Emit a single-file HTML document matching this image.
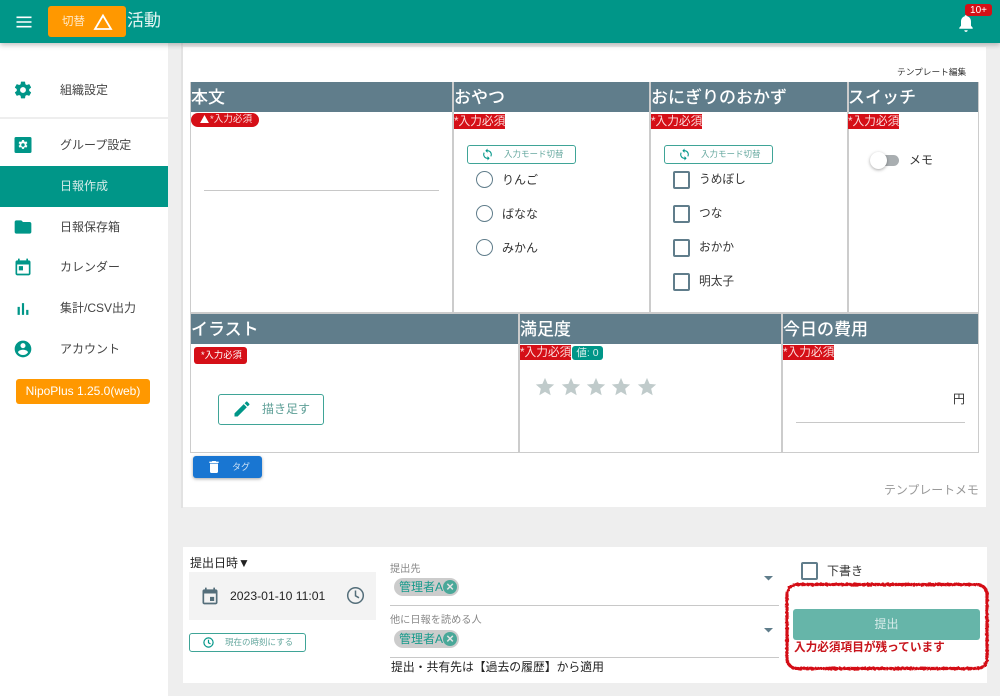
<!DOCTYPE html>
<html lang="ja"><head><meta charset="utf-8"><title>活動</title>
<style>
*{box-sizing:border-box}
html,body{margin:0;padding:0}
body{width:1000px;height:696px;overflow:hidden;position:relative;background:#eee;font-family:"Liberation Sans","Noto Sans CJK JP",sans-serif;color:#333}
.a{position:absolute;white-space:nowrap}
.nav{position:absolute;left:60px;font-size:12px;line-height:16px;color:#444;white-space:nowrap}
.ic{position:absolute;fill:#009688}
.h{position:absolute;background:#607d8b;color:#fff;font-size:17px;font-weight:500;line-height:31px;height:30px;white-space:nowrap;padding-left:0}
.v{position:absolute;width:2px;background:#ccc}
.req{position:absolute;background:#d50f17;color:#fbdcdc;font-size:11.7px;line-height:15px;height:15px;white-space:nowrap}
.mode{position:absolute;width:109px;height:19px;border:1px solid #3fa497;border-radius:3px;color:#66a89f;font-size:8.5px;line-height:17px;white-space:nowrap;padding-left:36px}
.mode svg{position:absolute;left:13px;top:2px;fill:#009688}
.r{position:absolute;width:17px;height:17px;border:1.5px solid #607d8b;border-radius:50%}
.c{position:absolute;width:17px;height:18px;border:2px solid #607d8b;border-radius:2px}
.t{position:absolute;font-size:12px;line-height:16px;color:#333;white-space:nowrap}
.chip{position:absolute;left:394px;width:65px;height:18px;background:#ccc;border-radius:9px;color:#169a8b;font-size:12px;line-height:18px;padding-left:5px;white-space:nowrap}
.chip i{position:absolute;right:2px;top:2px;width:14px;height:14px;border-radius:50%;background:#4aa899;color:#e4e4e4;font:bold 13px/14px "Liberation Sans",sans-serif;text-align:center}
.star{position:absolute;top:376px;fill:#c0cbcb}
</style></head><body>

<!-- content panels -->
<div class="a" style="left:168px;top:43px;width:13px;height:653px;background:#eee"></div>
<div class="a" style="left:181px;top:43px;width:2px;height:465px;background:#e2e2e2"></div>
<div class="a" style="left:183px;top:47px;width:803px;height:460px;background:#fff"></div>
<div class="a" style="left:183px;top:547px;width:804px;height:136px;background:#fff"></div>

<!-- sidebar -->
<div class="a" style="left:0;top:43px;width:168px;height:653px;background:#fff"></div>
<div class="a" style="left:0;top:117px;width:168px;height:2px;background:#eee"></div>
<div class="a" style="left:0;top:166px;width:168px;height:41px;background:#009688"></div>

<svg class="ic" style="left:13px;top:80px" width="20" height="20" viewBox="0 0 24 24"><path d="M19.430 12.980c.04-.32.07-.64.07-.98s-.03-.66-.07-.98l2.110-1.650c.19-.15.24-.42.12-.64l-2-3.460c-.12-.22-.39-.3-.61-.22l-2.490 1c-.52-.4-1.080-.73-1.690-.98l-.38-2.650C14.460 2.180 14.250 2 14 2h-4c-.25 0-.46.18-.49.42l-.38 2.650c-.61.25-1.170.59-1.690.98l-2.490-1c-.23-.09-.49 0-.61.22l-2 3.460c-.13.22-.07.49.12.64l2.110 1.650c-.04.32-.07.65-.07.98s.03.66.07.98l-2.110 1.650c-.19.15-.24.42-.12.64l2 3.460c.12.22.39.3.61.22l2.490-1c.52.4 1.080.73 1.690.98l.38 2.650c.03.24.24.42.49.42h4c.25 0 .46-.18.49-.42l.38-2.650c.61-.25 1.170-.59 1.690-.98l2.490 1c.23.09.49 0 .61-.22l2-3.460c.12-.22.07-.49-.12-.64l-2.110-1.650zM12 15.500c-1.930 0-3.500-1.570-3.500-3.500s1.570-3.500 3.500-3.500 3.500 1.570 3.500 3.500-1.570 3.500-3.500 3.500z"/></svg>
<svg class="ic" style="left:11px;top:133px" width="24" height="24" viewBox="0 0 24 24"><path fill-rule="evenodd" d="M5 4h14a1.500 1.500 0 0 1 1.500 1.500v13A1.500 1.500 0 0 1 19 20H5a1.500 1.500 0 0 1-1.500-1.500v-13A1.500 1.500 0 0 1 5 4zM12 7l-1 .1-.3 1.400-.8.4-1.300-.5-1 1.700 1.100.9v1l-1.100.9 1 1.700 1.300-.5.8.4.3 1.400h2l.3-1.400.8-.4 1.300.5 1-1.700-1.100-.9v-1l1.100-.9-1-1.700-1.300.5-.8-.4-.3-1.400zM12 10.300a1.700 1.700 0 1 1 0 3.400 1.700 1.700 0 0 1 0-3.400z"/></svg>
<svg class="ic" style="left:13px;top:217px" width="20" height="20" viewBox="0 0 24 24"><path d="M10 4H4c-1.100 0-2 .9-2 2v12c0 1.100.9 2 2 2h16c1.100 0 2-.9 2-2V8c0-1.100-.9-2-2-2h-8l-2-2z"/></svg>
<svg class="ic" style="left:13px;top:257px" width="20" height="20" viewBox="0 0 24 24"><path d="M19 4h-1V2h-2v2H8V2H6v2H5c-1.110 0-2 .9-2 2v14c0 1.100.89 2 2 2h14c1.100 0 2-.9 2-2V6c0-1.100-.9-2-2-2zm0 16H5V9h14v11zM7 11h5v5H7z"/></svg>
<svg class="ic" style="left:13px;top:299px" width="20" height="20" viewBox="0 0 24 24"><path d="M5.500 9.500h2.700V19H5.500zM10.700 5h2.600v14h-2.600zM15.800 13h2.700v6h-2.700z"/></svg>
<svg class="ic" style="left:13px;top:339px" width="20" height="20" viewBox="0 0 24 24"><path d="M12 2C6.480 2 2 6.480 2 12s4.480 10 10 10 10-4.480 10-10S17.520 2 12 2zm0 3c1.660 0 3 1.340 3 3s-1.340 3-3 3-3-1.340-3-3 1.340-3 3-3zm0 14.200c-2.500 0-4.710-1.280-6-3.220.03-1.990 4-3.080 6-3.080 1.990 0 5.970 1.090 6 3.080-1.290 1.940-3.500 3.220-6 3.220z"/></svg>

<div class="nav" style="top:82px">組織設定</div>
<div class="nav" style="top:137px">グループ設定</div>
<div class="nav" style="top:178px;color:#d5ece9">日報作成</div>
<div class="nav" style="top:219px">日報保存箱</div>
<div class="nav" style="top:259px">カレンダー</div>
<div class="nav" style="top:300px">集計/CSV出力</div>
<div class="nav" style="top:341px">アカウント</div>
<div class="a" style="left:16px;top:379px;width:134px;height:25px;background:#ff9800;border-radius:3px;color:#fff;font-size:12px;line-height:25px;text-align:center">NipoPlus 1.25.0(web)</div>

<!-- header -->
<div class="a" style="left:0;top:0;width:1000px;height:43px;background:#009688;box-shadow:0 2px 5px rgba(0,0,0,.25)"></div>
<svg class="a" style="left:12px;top:10px" width="24" height="24" viewBox="0 0 24 24" fill="#fff"><path d="M4.500 6.500h15v1.600h-15zM4.500 11.200h15v1.600h-15zM4.500 15.900h15v1.600h-15z"/></svg>
<div class="a" style="left:48px;top:6px;width:78px;height:31px;background:#ff9800;border-radius:3px"></div>
<div class="a" style="left:62px;top:14px;font-size:11.5px;line-height:16px;color:#ffe9c9">切替</div>
<svg class="a" style="left:93px;top:13px" width="20" height="18" viewBox="0 0 20 18"><path d="M10 2.500 2 16h16z" fill="none" stroke="#fff" stroke-width="1.800"/></svg>
<div class="a" style="left:127px;top:10px;font-size:17px;line-height:22px;color:#e6f5f3">活動</div>
<svg class="a" style="left:955px;top:13px" width="22" height="20" viewBox="0 0 22 20" fill="#fff"><path d="M11 2c-.8 0-1.300.6-1.300 1.300-2.400.7-3.700 2.800-3.700 5.400v4l-1.700 2v1h13.400v-1l-1.700-2v-4c0-2.600-1.300-4.700-3.700-5.400C12.300 2.600 11.800 2 11 2zM9.300 17.300c0 .9.800 1.700 1.700 1.700s1.700-.8 1.700-1.700z"/></svg>
<div class="a" style="left:965px;top:4px;width:27px;height:12px;background:#d50f17;border-radius:3px;color:#fff;font-size:10px;line-height:13px;text-align:center">10+</div>

<!-- template -->
<div class="a" style="left:897px;top:66px;font-size:8.7px;line-height:12px;color:#333">テンプレート編集</div>
<div class="a" style="left:190px;top:82px;width:789px;height:372px;border:1px solid #ccc;height:371px"></div>
<div class="h" style="left:191px;top:82px;width:262px">本文</div>
<div class="h" style="left:454px;top:82px;width:196px">おやつ</div>
<div class="h" style="left:651px;top:82px;width:196px">おにぎりのおかず</div>
<div class="h" style="left:848px;top:82px;width:130px">スイッチ</div>
<div class="v" style="left:452px;top:82px;height:231px"></div>
<div class="v" style="left:649px;top:82px;height:231px"></div>
<div class="v" style="left:847px;top:82px;height:231px"></div>
<div class="a" style="left:190px;top:312px;width:789px;height:2px;background:#ccc"></div>
<div class="h" style="left:191px;top:314px;width:327px">イラスト</div>
<div class="h" style="left:520px;top:314px;width:261px">満足度</div>
<div class="h" style="left:783px;top:314px;width:195px">今日の費用</div>
<div class="v" style="left:518px;top:314px;height:139px"></div>
<div class="v" style="left:781px;top:314px;height:139px"></div>

<!-- required badges -->
<div class="req" style="left:191px;top:113px;width:68px;height:14px;border-radius:7px;font-size:9.6px;line-height:14px;padding-left:9px"><svg width="9" height="8" viewBox="0 0 10 9" style="vertical-align:-.5px;fill:#fff;margin-right:1px"><path d="M5 0 10 9H0z"/></svg>*入力必須</div>
<div class="req" style="left:454px;top:114px">*入力必須</div>
<div class="req" style="left:651px;top:114px">*入力必須</div>
<div class="req" style="left:848px;top:114px">*入力必須</div>
<div class="req" style="left:194px;top:347px;width:53px;height:17px;border-radius:3px;font-size:9.3px;line-height:17px;padding-left:7px;color:#fff">*入力必須</div>
<div class="req" style="left:520px;top:345px">*入力必須</div>
<div class="a" style="left:572px;top:346px;width:31px;height:14px;background:#009688;border-radius:3px;color:#d8efec;font-size:10.5px;line-height:14px;text-align:center">値: 0</div>
<div class="req" style="left:783px;top:345px">*入力必須</div>

<div class="a" style="left:204px;top:190px;width:235px;height:1px;background:#c8c8c8"></div>

<!-- oyatsu -->
<div class="mode" style="left:467px;top:145px"><svg width="13" height="13" viewBox="0 0 24 24"><path d="M12 4V1L8 5l4 4V6c3.310 0 6 2.690 6 6 0 1.010-.25 1.970-.7 2.800l1.460 1.460A7.930 7.930 0 0 0 20 12c0-4.420-3.580-8-8-8zm0 14c-3.310 0-6-2.690-6-6 0-1.010.25-1.970.7-2.800L5.240 7.740A7.930 7.930 0 0 0 4 12c0 4.420 3.580 8 8 8v3l4-4-4-4v3z"/></svg>入力モード切替</div>
<div class="r" style="left:476px;top:171px"></div><div class="t" style="left:502px;top:172px">りんご</div>
<div class="r" style="left:476px;top:205px"></div><div class="t" style="left:502px;top:206px">ばなな</div>
<div class="r" style="left:476px;top:239px"></div><div class="t" style="left:502px;top:240px">みかん</div>

<!-- onigiri -->
<div class="mode" style="left:664px;top:145px"><svg width="13" height="13" viewBox="0 0 24 24"><path d="M12 4V1L8 5l4 4V6c3.310 0 6 2.690 6 6 0 1.010-.25 1.970-.7 2.800l1.460 1.460A7.930 7.930 0 0 0 20 12c0-4.420-3.580-8-8-8zm0 14c-3.310 0-6-2.690-6-6 0-1.010.25-1.970.7-2.800L5.240 7.740A7.930 7.930 0 0 0 4 12c0 4.420 3.580 8 8 8v3l4-4-4-4v3z"/></svg>入力モード切替</div>
<div class="c" style="left:673px;top:171px"></div><div class="t" style="left:699px;top:172px;font-size:11.7px">うめぼし</div>
<div class="c" style="left:673px;top:205px"></div><div class="t" style="left:699px;top:206px;font-size:11.7px">つな</div>
<div class="c" style="left:673px;top:239px"></div><div class="t" style="left:699px;top:240px;font-size:11.7px">おかか</div>
<div class="c" style="left:673px;top:273px"></div><div class="t" style="left:699px;top:274px;font-size:11.7px">明太子</div>

<!-- switch -->
<div class="a" style="left:872px;top:155px;width:27px;height:11px;background:#a9aeb1;border-radius:6px"></div>
<div class="a" style="left:870px;top:152px;width:17px;height:17px;background:#fff;border-radius:50%;box-shadow:0 1px 3px rgba(0,0,0,.35)"></div>
<div class="t" style="left:909px;top:152px">メモ</div>

<!-- illust -->
<div class="a" style="left:218px;top:394px;width:106px;height:31px;border:1px solid #3fa497;border-radius:3px;color:#5e9f97;font-size:12px;line-height:29px;padding-left:43px">描き足す</div>
<svg class="ic" style="left:232px;top:399px" width="20" height="20" viewBox="0 0 24 24"><path d="M3 17.250V21h3.750L17.810 9.940l-3.750-3.750L3 17.250zM20.710 7.040c.39-.39.39-1.020 0-1.410l-2.340-2.340c-.39-.39-1.020-.39-1.410 0l-1.830 1.830 3.750 3.750 1.830-1.830z"/></svg>

<!-- stars -->
<svg class="star" style="left:534px" width="22" height="22" viewBox="0 0 24 24"><path d="M12 17.270 18.180 21l-1.640-7.030L22 9.240l-7.190-.61L12 2 9.190 8.630 2 9.240l5.460 4.730L5.820 21z"/></svg>
<svg class="star" style="left:560px" width="22" height="22" viewBox="0 0 24 24"><path d="M12 17.270 18.180 21l-1.640-7.030L22 9.240l-7.190-.61L12 2 9.190 8.630 2 9.240l5.460 4.730L5.820 21z"/></svg>
<svg class="star" style="left:585px" width="22" height="22" viewBox="0 0 24 24"><path d="M12 17.270 18.180 21l-1.640-7.030L22 9.240l-7.190-.61L12 2 9.190 8.630 2 9.240l5.460 4.730L5.820 21z"/></svg>
<svg class="star" style="left:610px" width="22" height="22" viewBox="0 0 24 24"><path d="M12 17.270 18.180 21l-1.640-7.030L22 9.240l-7.190-.61L12 2 9.190 8.630 2 9.240l5.460 4.730L5.820 21z"/></svg>
<svg class="star" style="left:636px" width="22" height="22" viewBox="0 0 24 24"><path d="M12 17.270 18.180 21l-1.640-7.030L22 9.240l-7.190-.61L12 2 9.190 8.630 2 9.240l5.460 4.730L5.820 21z"/></svg>

<!-- cost -->
<div class="t" style="left:953px;top:391px">円</div>
<div class="a" style="left:796px;top:422px;width:169px;height:1px;background:#c8c8c8"></div>

<!-- tag button -->
<div class="a" style="left:193px;top:456px;width:69px;height:22px;background:#1976d2;border-radius:3px;box-shadow:0 1px 3px rgba(0,0,0,.35);color:#cfe3f6;font-size:9px;line-height:22px;padding-left:39px">タグ</div>
<svg class="a" style="left:206px;top:459px" width="16" height="16" viewBox="0 0 24 24" fill="#fff"><path d="M6 19c0 1.100.9 2 2 2h8c1.100 0 2-.9 2-2V7H6v12zM19 4h-3.500l-1-1h-5l-1 1H5v2h14V4z"/></svg>
<div class="a" style="left:884px;top:482px;font-size:11.9px;line-height:16px;color:#999">テンプレートメモ</div>

<!-- submit area -->
<div class="t" style="left:190px;top:555px;color:#222">提出日時▼</div>
<div class="a" style="left:189px;top:572px;width:187px;height:48px;background:#f3f3f3"></div>
<svg class="a" style="left:200px;top:586px;fill:#546e7a" width="20" height="20" viewBox="0 0 24 24"><path d="M19 4h-1V2h-2v2H8V2H6v2H5c-1.110 0-2 .9-2 2v14c0 1.100.89 2 2 2h14c1.100 0 2-.9 2-2V6c0-1.100-.9-2-2-2zm0 16H5V9h14v11zM12 13h5v5h-5z"/></svg>
<div class="a" style="left:230px;top:588px;font-size:12.2px;line-height:16px;color:#222">2023-01-10 11:01</div>
<svg class="a" style="left:345px;top:585px" width="21" height="21" viewBox="0 0 21 21" fill="none" stroke="#546e7a" stroke-width="1.500"><circle cx="10.500" cy="10.500" r="7.800"/><path d="M10.500 5.500v5.300l3.500 2"/></svg>
<div class="a" style="left:189px;top:633px;width:117px;height:19px;border:1px solid #3fa497;border-radius:3px;color:#66a89f;font-size:8.5px;line-height:17px;padding-left:35px">現在の時刻にする</div>
<svg class="a" style="left:202px;top:636px" width="13" height="13" viewBox="0 0 13 13" fill="none" stroke="#009688" stroke-width="1.200"><circle cx="6.500" cy="6.500" r="4.600"/><path d="M6.500 3.800v3l2 1.100"/></svg>

<div class="a" style="left:390px;top:563px;font-size:10.2px;line-height:13px;color:#888">提出先</div>
<div class="chip" style="top:578px">管理者A<i>×</i></div>
<svg class="a" style="left:763px;top:575px" width="12" height="7" viewBox="0 0 12 7" fill="#607d8b"><path d="M1 1h9L5.500 5.500z"/></svg>
<div class="a" style="left:390px;top:605px;width:389px;height:1px;background:#c8c8c8"></div>
<div class="a" style="left:390px;top:614px;font-size:10.2px;line-height:13px;color:#888">他に日報を読める人</div>
<div class="chip" style="top:630px">管理者A<i>×</i></div>
<svg class="a" style="left:763px;top:627px" width="12" height="7" viewBox="0 0 12 7" fill="#607d8b"><path d="M1 1h9L5.500 5.500z"/></svg>
<div class="a" style="left:390px;top:657px;width:389px;height:1px;background:#c8c8c8"></div>
<div class="t" style="left:391px;top:659px;color:#222;font-size:11.83px">提出・共有先は【過去の履歴】から適用</div>

<div class="c" style="left:801px;top:562px"></div>
<div class="t" style="left:827px;top:563px">下書き</div>
<div class="a" style="left:793px;top:609px;width:187px;height:31px;background:#66b5a9;border-radius:3px;color:#d8ecea;font-size:12px;line-height:31px;text-align:center">提出</div>
<div class="a" style="left:794px;top:640px;font-size:11.65px;font-weight:700;line-height:16px;color:#c8141c">入力必須項目が残っています</div>
<svg class="a" style="left:780px;top:578px" width="214" height="97" viewBox="0 0 214 97"><defs><filter id="rough" x="-5%" y="-10%" width="110%" height="120%"><feTurbulence type="fractalNoise" baseFrequency=".5" numOctaves="2" seed="3"/><feDisplacementMap in="SourceGraphic" scale="2.5"/></filter></defs><rect x="7" y="6.500" width="200" height="84" rx="10" fill="none" stroke="#d40d16" stroke-width="3.200" filter="url(#rough)"/></svg>

</body></html>
